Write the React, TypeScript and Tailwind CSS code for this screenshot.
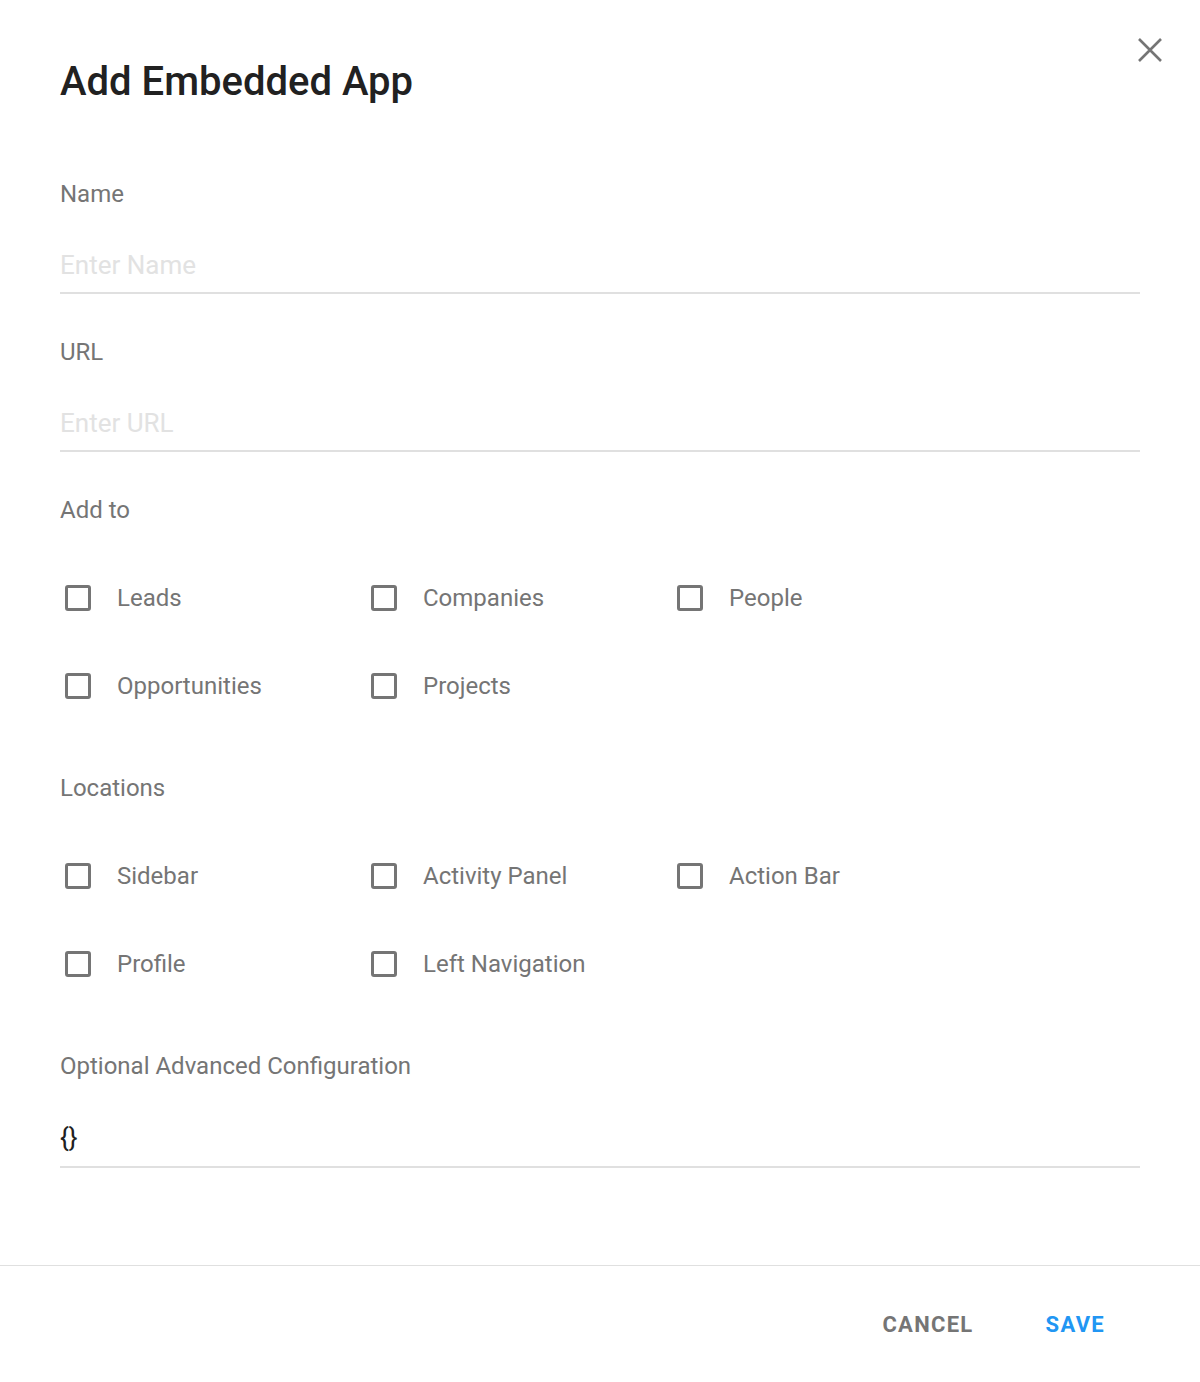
function Checkbox({ label }: { label: string }) {
  return (
    <label className="flex h-[88px] items-center">
      <span className="ml-[5px] h-[26px] w-[26px] rounded-[3px] border-[3px] border-[#757575]" />
      <span className="ml-[26px] text-[24px] text-[#757575]">{label}</span>
    </label>
  );
}

function Field({ label, placeholder, value }: { label: string; placeholder?: string; value?: string }) {
  return (
    <div className="mt-[42px] first:mt-0">
      <div className="text-[24px] leading-8 text-[#757575]">{label}</div>
      <div
        className={`flex h-[54px] items-center border-b-2 border-[#e0e0e0] ${value ? "mt-[32px] pb-[6px]" : "mt-[30px] pb-[2px]"}`}
      >
        {value ? (
          <span className="text-[26px] text-[#212121]">{value}</span>
        ) : (
          <span className="text-[26px] text-[#e2e2e2]">{placeholder}</span>
        )}
      </div>
    </div>
  );
}

export default function App() {
  const addTo = ["Leads", "Companies", "People", "Opportunities", "Projects"];
  const locations = ["Sidebar", "Activity Panel", "Action Bar", "Profile", "Left Navigation"];

  return (
    <div className="min-h-[1382px] bg-white font-['Roboto',sans-serif]">
      <div className="relative px-[60px] pb-[97px] pt-[58px]">
        <button className="absolute right-[37px] top-[37px] p-0 text-[#757575]" aria-label="Close">
          <svg width="26" height="26" viewBox="0 0 26 26" fill="none" stroke="currentColor" strokeWidth="2.6">
            <path d="M2 2 L24 24 M24 2 L2 24" />
          </svg>
        </button>
        <h1 className="text-[40px] font-medium leading-[48px] text-[#212121]">Add Embedded App</h1>

        <div className="mt-[72px]">
          <Field label="Name" placeholder="Enter Name" />
          <Field label="URL" placeholder="Enter URL" />

          <div className="mt-[42px]">
            <div className="text-[24px] leading-8 text-[#757575]">Add to</div>
            <div className="mt-[28px] grid grid-cols-[306px_306px_306px]">
              {addTo.map((l) => (
                <Checkbox key={l} label={l} />
              ))}
            </div>
          </div>

          <div className="mt-[42px]">
            <div className="text-[24px] leading-8 text-[#757575]">Locations</div>
            <div className="mt-[28px] grid grid-cols-[306px_306px_306px]">
              {locations.map((l) => (
                <Checkbox key={l} label={l} />
              ))}
            </div>
          </div>

          <Field label="Optional Advanced Configuration" value="{}" />
        </div>
      </div>

      <div className="flex h-[117px] items-center justify-end border-t border-[#e0e0e0] pr-[95px]">
        <button className="text-[22px] font-bold tracking-[1.3px] text-[#757575]">CANCEL</button>
        <button className="ml-[72px] text-[22px] font-bold tracking-[1.3px] text-[#2196f3]">SAVE</button>
      </div>
    </div>
  );
}
